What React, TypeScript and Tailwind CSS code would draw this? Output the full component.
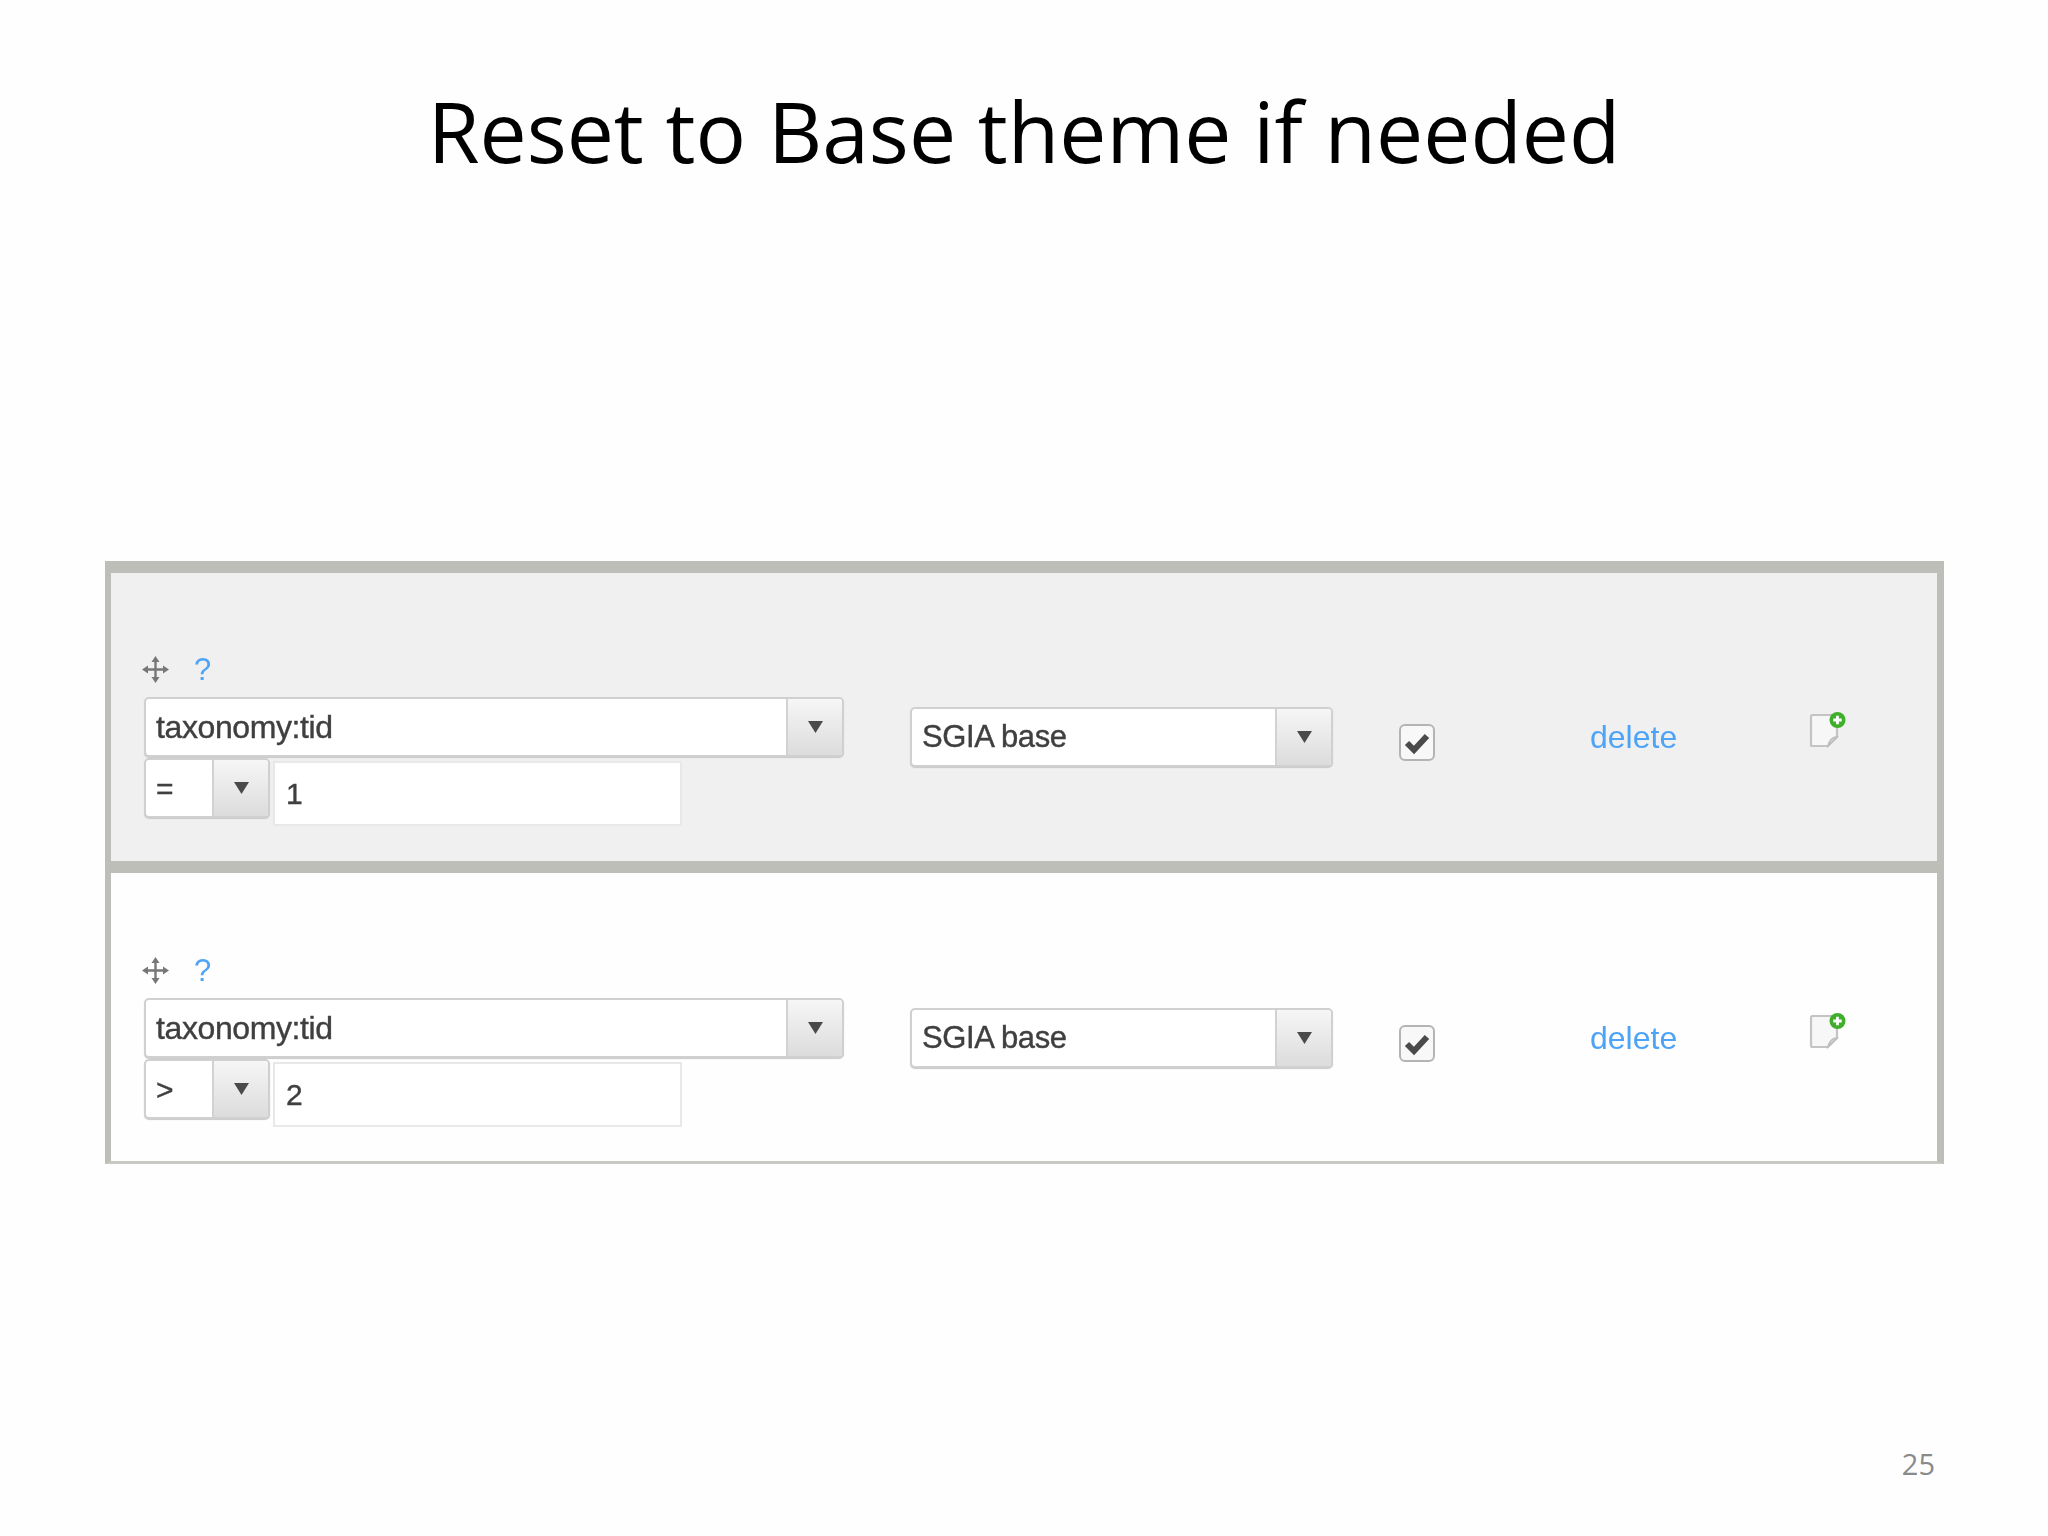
import React from "react";

const Arrow = ({ size = 17 }: { size?: number }) => (
  <svg width={size} height={size - 3} viewBox="0 0 17 14">
    <path d="M1 1 H16 L8.5 13 Z" fill="#4a4a4a" />
  </svg>
);

const Select = ({ label, width, height, arrowWidth, textClass }: { label: string; width: string; height: string; arrowWidth: string; textClass: string }) => (
  <div className={`flex ${width} ${height} rounded-[5px] border-2 border-[#d0d0d0] bg-white shadow-[0_1px_1px_#c8c8c8] overflow-hidden`}>
    <div className={`flex-1 flex items-center pl-[10px] text-[#3f3f3f] ${textClass}`}>{label}</div>
    <div className={`${arrowWidth} flex items-center justify-center border-l-2 border-[#d2d2d2] bg-gradient-to-b from-[#f6f6f6] to-[#dcdcdc]`}>
      <Arrow />
    </div>
  </div>
);

const MoveIcon = () => (
  <svg width="27" height="27" viewBox="0 0 27 27" fill="none">
    <path d="M13.5 3 V24 M3 13.5 H24" stroke="#777" strokeWidth="2.4" />
    <path d="M13.5 0 L17.5 6 H9.5 Z M13.5 27 L17.5 21 H9.5 Z M0 13.5 L6 9.5 V17.5 Z M27 13.5 L21 9.5 V17.5 Z" fill="#777" />
  </svg>
);

const NoteIcon = () => (
  <div className="relative w-[37px] h-[36px]">
    <svg width="37" height="36" viewBox="0 0 37 36" fill="none" className="absolute left-0 top-0">
      <path d="M2 4.5 Q2 3 3.5 3 H28 V25 L19 34 H3.5 Q2 34 2 32.5 Z" fill="#f7f7f7" stroke="#c4c4c4" strokeWidth="2.2" />
      <path d="M28 25 Q21 25 19 34 Z" fill="#d8d8d8" stroke="#bdbdbd" strokeWidth="1.5" />
      <circle cx="28.5" cy="8" r="8" fill="#3fae2a" />
      <path d="M28.5 3.8 V12.2 M24.3 8 H32.7" stroke="#fff" strokeWidth="2.8" />
    </svg>
  </div>
);

const Check = () => (
  <div className="mt-[151px] ml-[66px] w-[36px] h-[37px] rounded-[6px] border-2 border-[#b4b4b4] bg-[#f8f8f8] flex items-center justify-center">
    <svg width="26" height="24" viewBox="0 0 26 24" fill="none">
      <path d="M3 12 L10 19 L23 5" stroke="#4a4a4a" strokeWidth="6" />
    </svg>
  </div>
);

const Row = ({ op, value, bg, extra }: { op: string; value: string; bg: string; extra: string }) => (
  <div className={`flex h-[288px] items-start pl-[33px] ${bg}`}>
    <div className={`w-[700px] shrink-0 pt-[83px] ${extra}`}>
      <div className="flex h-[27px] items-center mb-[14px] -ml-[2px]">
        <MoveIcon />
        <span className="ml-[25px] text-[31px] leading-[27px] text-[#4da3f5] font-['Liberation_Sans',sans-serif]">?</span>
      </div>
      <Select label="taxonomy:tid" width="w-[700px]" height="h-[60px]" arrowWidth="w-[56px]" textClass="text-[32px] tracking-[-0.4px] [-webkit-text-stroke:0.4px_#3f3f3f] font-['Liberation_Sans',sans-serif]" />
      <div className="flex items-start mt-[1px]">
        <Select label={op} width="w-[126px]" height="h-[60px]" arrowWidth="w-[56px]" textClass="text-[30px] [-webkit-text-stroke:0.4px_#3f3f3f] font-['Liberation_Sans',sans-serif]" />
        <div className="ml-[3px] mt-[3px] w-[409px] h-[65px] border-2 border-[#e8e8e8] bg-white flex items-center pl-[11px] text-[30px] text-[#3f3f3f] [-webkit-text-stroke:0.4px_#3f3f3f] font-['Liberation_Sans',sans-serif]">{value}</div>
      </div>
    </div>
    <div className={`ml-[66px] mt-[134px] ${extra}`}>
      <Select label="SGIA base" width="w-[423px]" height="h-[60px]" arrowWidth="w-[56px]" textClass="text-[31px] tracking-[-0.4px] [-webkit-text-stroke:0.4px_#3f3f3f] font-['Liberation_Sans',sans-serif]" />
    </div>
    <div className={extra}><Check /></div>
    <div className={`ml-[155px] mt-[142px] w-[219px] text-[32px] leading-[44px] text-[#4da3f5] font-['Liberation_Sans',sans-serif] ${extra}`}>delete</div>
    <div className={`mt-[139px] ${extra}`}><NoteIcon /></div>
  </div>
);

export default function App() {
  return (
    <div className="w-[2048px] h-[1536px] bg-[#fefefe] flex flex-col overflow-hidden">
      <h1 className="mt-[81px] h-[100px] text-center text-[84px] leading-[100px] font-normal text-black font-['Open_Sans',sans-serif]">
        Reset to Base theme if needed
      </h1>
      <div className="mt-[380px] ml-[105px] w-[1839px] h-[603px] border-x-[6px] border-r-[7px] border-t-[12px] border-b-[3px] border-x-[#bdbeb7] border-t-[#bdbeb7] border-b-[#c8c8c4] blur-[0.6px]">
        <Row op="=" value="1" bg="bg-[#f0f0f0]" extra="" />
        <div className="h-[12px] bg-[#bdbeb7]" />
        <Row op=">" value="2" bg="bg-[#fefefe]" extra="relative top-[1px]" />
      </div>
      <div className="mt-[280px] pr-[113px] text-right text-[29px] leading-[40px] text-[#8a8a8a] font-['Open_Sans',sans-serif]">25</div>
    </div>
  );
}
